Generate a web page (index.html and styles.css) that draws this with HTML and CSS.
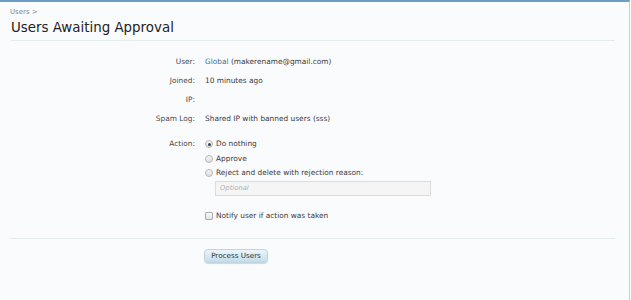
FILE: index.html
```html
<!DOCTYPE html>
<html>
<head>
<meta charset="utf-8">
<link rel="stylesheet" href="styles.css">
</head>
<body>
<div class="page">
  <div class="crumbs"><a href="#">Users</a> &gt;</div>
  <h1 class="title">Users Awaiting Approval</h1>
  <form class="form">
    <div class="row"><div class="label">User:</div><div class="value"><a href="#" class="link">Global</a> (makerename@gmail.com)</div></div>
    <div class="row"><div class="label">Joined:</div><div class="value">10 minutes ago</div></div>
    <div class="row"><div class="label">IP:</div><div class="value"></div></div>
    <div class="row"><div class="label">Spam Log:</div><div class="value">Shared IP with banned users (sss)</div></div>
    <div class="row action"><div class="label">Action:</div>
      <div class="value options">
        <label class="opt"><span class="radio checked"></span>Do nothing</label>
        <label class="opt"><span class="radio"></span>Approve</label>
        <label class="opt"><span class="radio"></span>Reject and delete with rejection reason:</label>
        <div class="reason">Optional</div>
        <label class="opt notify"><span class="check"></span>Notify user if action was taken</label>
      </div>
    </div>
    <div class="submit"><span class="button">Process Users</span></div>
  </form>
</div>
</body>
</html>
```

FILE: styles.css
```css
html, body {
  margin: 0;
  padding: 0;
  background: #ffffff;
}
body {
  font-family: "DejaVu Sans", sans-serif;
  color: #222;
}
.page {
  width: 630px;
  height: 300px;
  border-top: 2px solid #6f9cc1;
  border-right: 1px solid #c8cdd2;
  background: #fafbfd;
  box-sizing: border-box;
  padding: 0 14px 0 10px;
}
.crumbs {
  font-size: 7px;
  color: #7a8a9a;
  padding-top: 5px;
  height: 11px;
  line-height: 11px;
}
.crumbs a { color: #7a8a9a; text-decoration: none; }
.title {
  margin: 0 0 0 1px;
  font-size: 13.4px;
  font-weight: normal;
  line-height: 20px;
  height: 22px;
  color: #222;
  border-bottom: 1px solid #e2ecec;
}
.form {
  margin: 0;
  padding-top: 16px;
  font-size: 7.4px;
}
.row {
  display: flex;
  line-height: 10px;
  margin-bottom: 9px;
}
.label {
  width: 185px;
  text-align: right;
  color: #4a4a4a;
  flex: none;
}
.value {
  padding-left: 10px;
  color: #3a3a3a;
}
.link { color: #4b6e8e; text-decoration: none; }
.row.action { margin-top: 15px; }
.options {
  display: flex;
  flex-direction: column;
}
.opt {
  display: flex;
  align-items: center;
  height: 10px;
  margin-bottom: 4.5px;
  color: #3a3a3a;
}
.radio {
  width: 8px;
  height: 8px;
  border-radius: 50%;
  border: 1px solid #b5b8bd;
  box-sizing: border-box;
  background: linear-gradient(#f8f8f8, #dcdde0);
  margin-right: 3px;
  position: relative;
}
.radio.checked::after {
  content: "";
  position: absolute;
  left: 1.5px;
  top: 1.5px;
  width: 3px;
  height: 3px;
  border-radius: 50%;
  background: #444;
}
.check {
  width: 8px;
  height: 8px;
  border: 1px solid #a9adb3;
  border-radius: 1px;
  box-sizing: border-box;
  background: linear-gradient(#fafafa, #e2e3e6);
  margin-right: 3px;
}
.reason {
  margin: -2px 0 0 10px;
  width: 216px;
  height: 15px;
  box-sizing: border-box;
  border: 1px solid #dcdcdc;
  background: #f5f5f5;
  color: #b0b0b0;
  font-style: italic;
  font-size: 6.8px;
  line-height: 13px;
  padding-left: 4px;
}
.notify { margin-top: 15px; }
.submit {
  margin-top: 13px;
  border-top: 1px solid #e2ecec;
  padding: 10px 0 0 194px;
}
.button {
  display: inline-block;
  width: 64px;
  height: 14px;
  box-sizing: border-box;
  border-radius: 4px;
  background: linear-gradient(#eef5fa, #c3dce9);
  box-shadow: 0 1px 1px rgba(0,0,0,0.15);
  border: 1px solid #c0d4e0;
  text-align: center;
  font-size: 7.2px;
  line-height: 12px;
  color: #2b3a48;
}
```
